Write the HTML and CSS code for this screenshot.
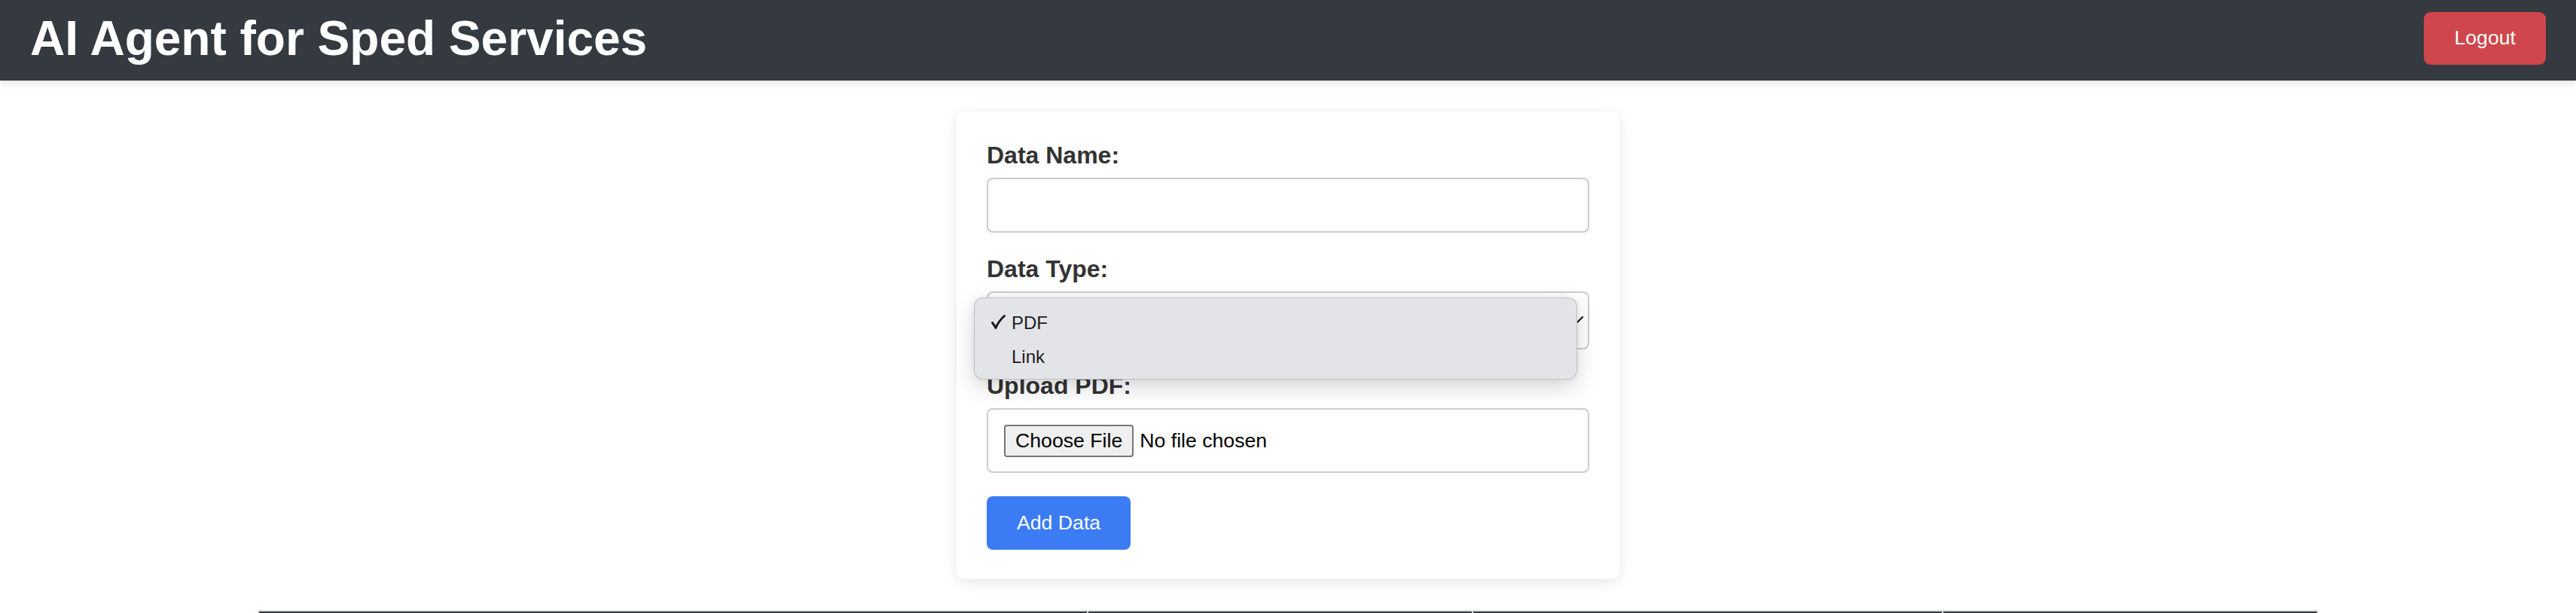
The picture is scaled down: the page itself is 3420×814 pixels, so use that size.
FILE: index.html
```html
<!DOCTYPE html>
<html lang="en">
<head>
<meta charset="utf-8">
<title>AI Agent for Sped Services</title>
<link rel="stylesheet" href="styles.css">
</head>
<body>
<header class="topbar">
  <h1 class="title">AI Agent for Sped Services</h1>
  <button class="logout" type="button">Logout</button>
</header>
<main class="main">
  <form class="card">
    <label class="field-label" for="dataName">Data Name:</label>
    <input class="text-input" id="dataName" type="text">

    <label class="field-label">Data Type:</label>
    <div class="select-box">
      <svg class="chevron" width="18" height="12" viewBox="0 0 18 12"><path d="M2 2 L9 9 L16 2" fill="none" stroke="#1c1c1c" stroke-width="2.2" stroke-linecap="round" stroke-linejoin="round"/></svg>
      <div class="popup">
        <div class="option"><span class="check"><svg width="20" height="19" viewBox="0 0 20 19"><path d="M2.5 10.5 Q5 13.5 7 17.5 Q11 8 18.5 1.5" fill="none" stroke="#111" stroke-width="2.8" stroke-linecap="round" stroke-linejoin="round"/></svg></span>PDF</div>
        <div class="option"><span class="check"></span>Link</div>
      </div>
    </div>

    <label class="field-label">Upload PDF:</label>
    <div class="file-box">
      <button class="file-btn" type="button">Choose File</button>
      <span class="file-status">No file chosen</span>
    </div>

    <button class="submit" type="button">Add Data</button>
  </form>

  <table class="data-table">
    <colgroup>
      <col class="col-name">
      <col class="col-type">
      <col class="col-source">
      <col class="col-actions">
    </colgroup>
    <thead>
      <tr>
        <th></th>
        <th></th>
        <th></th>
        <th></th>
      </tr>
    </thead>
  </table>
</main>
</body>
</html>
```

FILE: styles.css
```css
* {
  box-sizing: border-box;
}

body {
  margin: 0;
  background: #ffffff;
  font-family: "Liberation Sans", Arial, sans-serif;
  color: #333333;
}

.topbar {
  position: relative;
  z-index: 1;
  display: flex;
  justify-content: space-between;
  align-items: center;
  height: 107px;
  padding: 0 40px 6px;
  background: #343a40;
  box-shadow: 0 4px 10px rgba(0, 0, 0, 0.1);
}

.title {
  margin: 0;
  font-size: 64px;
  line-height: 72px;
  font-weight: bold;
  color: #ffffff;
}

.logout {
  height: 70px;
  padding: 0 40px;
  border: none;
  border-radius: 9px;
  background: #cf464c;
  color: #ffffff;
  font-family: "Liberation Sans", Arial, sans-serif;
  font-size: 26.67px;
}

.main {
  padding-top: 41px;
}

.card {
  width: 880px;
  margin: 0 auto;
  padding: 40px 40px 39px;
  background: #ffffff;
  border-radius: 10px;
  box-shadow: 0 4px 18px rgba(0, 0, 0, 0.1);
}

.field-label {
  display: block;
  font-size: 32px;
  line-height: 37px;
  font-weight: bold;
  color: #333333;
  margin-bottom: 11px;
}

.text-input {
  display: block;
  width: 100%;
  height: 73px;
  margin: 0 0 30px;
  border: 2px solid #cccccc;
  border-radius: 8px;
  background: #ffffff;
}

.select-box {
  position: relative;
  height: 77px;
  margin-bottom: 30px;
  border: 2px solid #cccccc;
  border-radius: 8px;
  background: #ffffff;
}

.chevron {
  position: absolute;
  right: 5px;
  top: 30px;
}

.popup {
  position: absolute;
  z-index: 2;
  left: -19px;
  top: 6px;
  width: 801px;
  height: 109px;
  padding-top: 11px;
  border: 1px solid rgba(0, 0, 0, 0.16);
  border-radius: 12px;
  background: #e3e4e8;
  box-shadow: 0 10px 30px rgba(0, 0, 0, 0.16), 0 0 8px rgba(0, 0, 0, 0.06);
}

.option {
  display: flex;
  align-items: center;
  height: 44.5px;
  line-height: 44.5px;
  padding-left: 21px;
  font-family: "Liberation Sans", Arial, sans-serif;
  font-size: 24px;
  color: #1d1d1f;
}

.check {
  display: flex;
  align-items: center;
  width: 28px;
  height: 44.5px;
  padding-bottom: 4px;
}

.file-box {
  display: flex;
  align-items: center;
  height: 86px;
  margin-bottom: 31px;
  padding: 0 21px;
  border: 2px solid #cccccc;
  border-radius: 8px;
}

.file-btn {
  height: 43px;
  padding: 0 13px;
  border: 2px solid #767676;
  border-radius: 4px;
  background: #efefef;
  color: #000000;
  font-family: "Liberation Sans", Arial, sans-serif;
  font-size: 26.67px;
}

.file-status {
  margin-left: 8px;
  font-size: 26.67px;
  color: #000000;
}

.submit {
  display: block;
  height: 71px;
  padding: 0 40px;
  border: none;
  border-radius: 8px;
  background: #3b7cf4;
  color: #ffffff;
  font-family: "Liberation Sans", Arial, sans-serif;
  font-size: 26.67px;
}

.data-table {
  width: 80%;
  margin: 41px auto 0;
  border-collapse: collapse;
}

.col-name { width: 40.27%; }
.col-type { width: 18.69%; }
.col-source { width: 22.82%; }
.col-actions { width: 18.22%; }

.data-table th {
  height: 86px;
  padding: 24px;
  border: 2px solid #dee2e6;
  background: #343a40;
  color: #ffffff;
  font-size: 32px;
  text-align: left;
}
```
